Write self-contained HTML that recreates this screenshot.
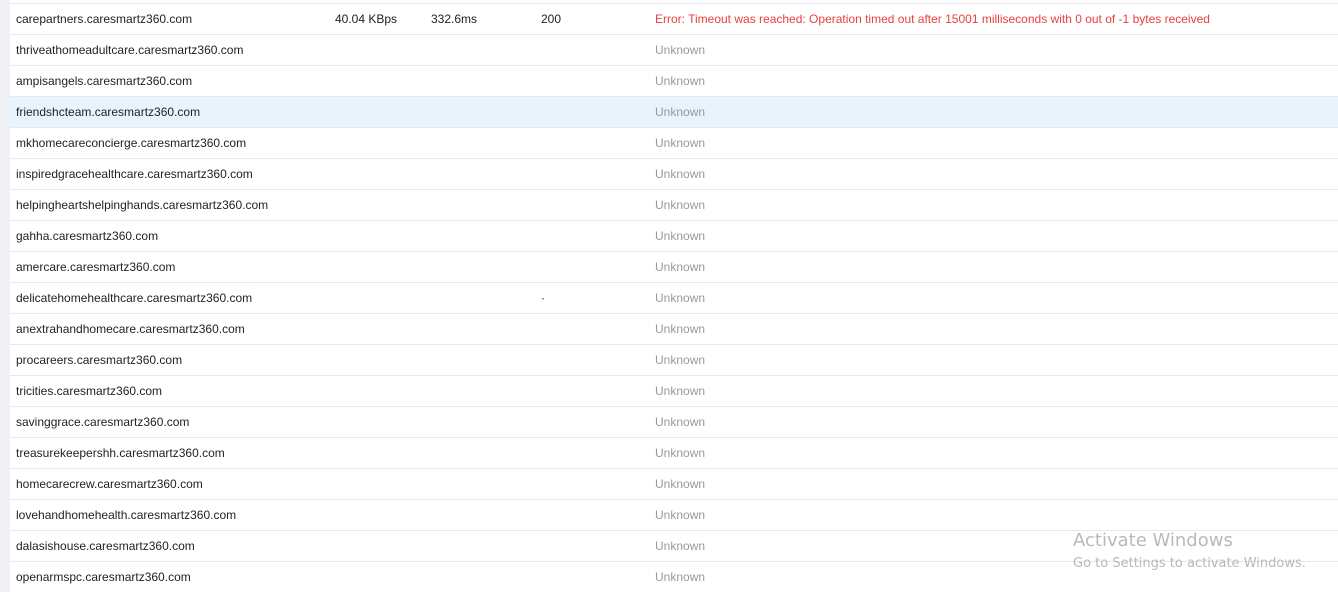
<!DOCTYPE html><html><head><style>
body{margin:0;width:1338px;height:592px;overflow:hidden;background:#fff;font-family:"Liberation Sans",sans-serif;font-size:12px;color:#222;position:relative}
.strip{position:absolute;left:0;top:0;width:10px;height:592px;background:#eef0f3}
.r{position:absolute;left:10px;right:0;height:30px;border-top:1px solid #e8e8e8;line-height:30px}
.r span{position:absolute;top:0}
.a{left:6px}.b{left:325px}.c{left:421px}.d{left:531px}.e{left:645px;color:#999}
.hl{background:#e8f4fd}
.aw{position:absolute;left:1073px;top:530px;color:#b9b9b9;font-family:"DejaVu Sans","Liberation Sans",sans-serif}
</style></head><body><div class="strip"></div>
<div class="r" style="top:3px"><span class="a">carepartners.caresmartz360.com</span><span class="b">40.04 KBps</span><span class="c">332.6ms</span><span class="d">200</span><span class="e" style="color:#e8413c">Error: Timeout was reached: Operation timed out after 15001 milliseconds with 0 out of -1 bytes received</span></div>
<div class="r" style="top:34px"><span class="a">thriveathomeadultcare.caresmartz360.com</span><span class="e">Unknown</span></div>
<div class="r" style="top:65px"><span class="a">ampisangels.caresmartz360.com</span><span class="e">Unknown</span></div>
<div class="r hl" style="top:96px"><span class="a">friendshcteam.caresmartz360.com</span><span class="e">Unknown</span></div>
<div class="r" style="top:127px"><span class="a">mkhomecareconcierge.caresmartz360.com</span><span class="e">Unknown</span></div>
<div class="r" style="top:158px"><span class="a">inspiredgracehealthcare.caresmartz360.com</span><span class="e">Unknown</span></div>
<div class="r" style="top:189px"><span class="a">helpingheartshelpinghands.caresmartz360.com</span><span class="e">Unknown</span></div>
<div class="r" style="top:220px"><span class="a">gahha.caresmartz360.com</span><span class="e">Unknown</span></div>
<div class="r" style="top:251px"><span class="a">amercare.caresmartz360.com</span><span class="e">Unknown</span></div>
<div class="r" style="top:282px"><span class="a">delicatehomehealthcare.caresmartz360.com</span><span class="d">·</span><span class="e">Unknown</span></div>
<div class="r" style="top:313px"><span class="a">anextrahandhomecare.caresmartz360.com</span><span class="e">Unknown</span></div>
<div class="r" style="top:344px"><span class="a">procareers.caresmartz360.com</span><span class="e">Unknown</span></div>
<div class="r" style="top:375px"><span class="a">tricities.caresmartz360.com</span><span class="e">Unknown</span></div>
<div class="r" style="top:406px"><span class="a">savinggrace.caresmartz360.com</span><span class="e">Unknown</span></div>
<div class="r" style="top:437px"><span class="a">treasurekeepershh.caresmartz360.com</span><span class="e">Unknown</span></div>
<div class="r" style="top:468px"><span class="a">homecarecrew.caresmartz360.com</span><span class="e">Unknown</span></div>
<div class="r" style="top:499px"><span class="a">lovehandhomehealth.caresmartz360.com</span><span class="e">Unknown</span></div>
<div class="r" style="top:530px"><span class="a">dalasishouse.caresmartz360.com</span><span class="e">Unknown</span></div>
<div class="r" style="top:561px"><span class="a">openarmspc.caresmartz360.com</span><span class="e">Unknown</span></div>
<div class="aw"><div style="font-size:18px">Activate Windows</div><div style="font-size:13px;margin-top:5px">Go to Settings to activate Windows.</div></div>
</body></html>
